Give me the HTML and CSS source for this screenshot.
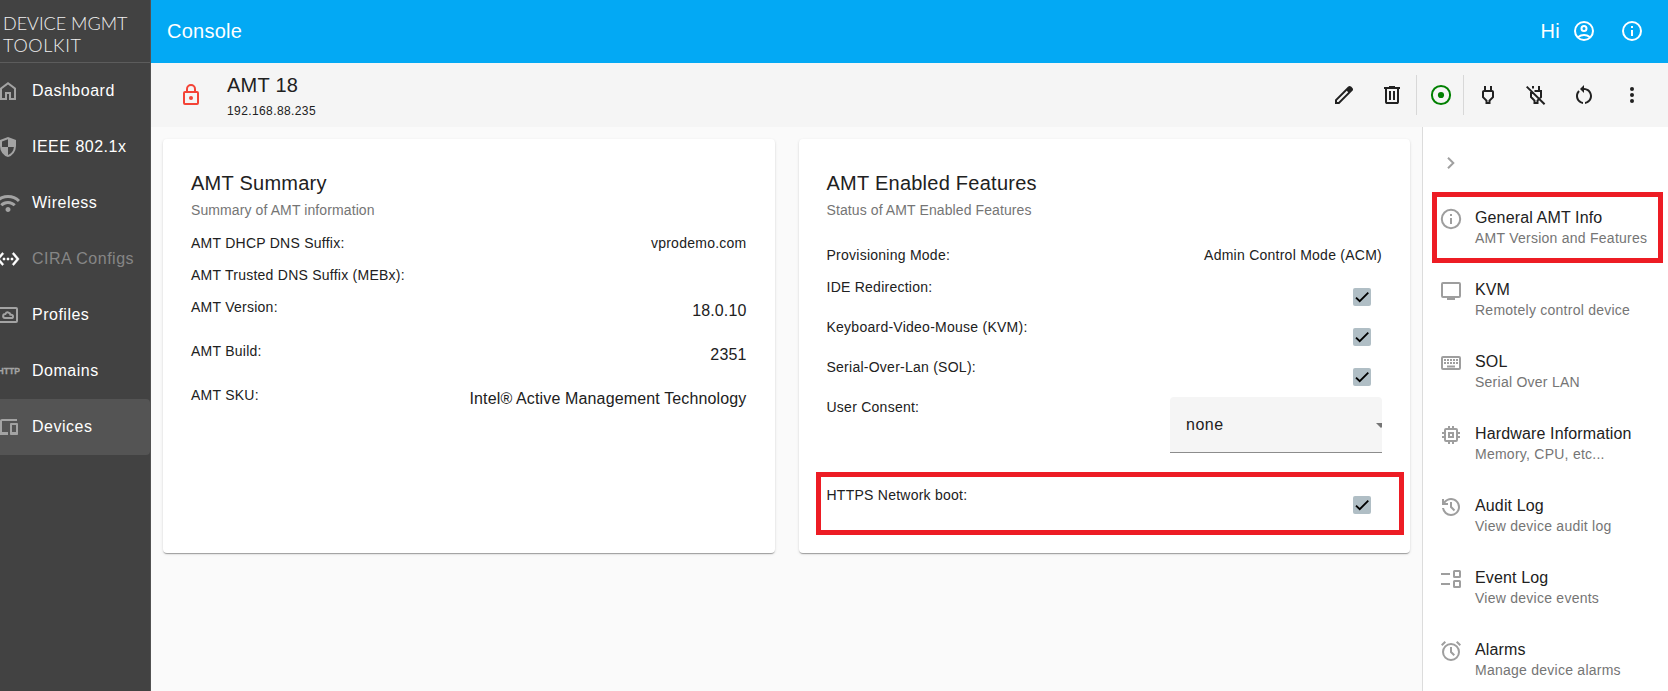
FILE: index.html
```html
<!DOCTYPE html>
<html lang="en">
<head>
<meta charset="utf-8">
<title>Device Management Toolkit</title>
<link rel="stylesheet" href="styles.css">
</head>
<body>
<div class="app">
  <aside class="sidebar">
    <div class="brand"><span class="brand-a">DEVICE MGMT</span><span class="brand-b">TOOLKIT</span></div>
    <nav class="nav">
      <a class="nav-item"><svg class="icon" viewBox="0 -960 960 960"><path d="M240-200h120v-240h240v240h120v-360L480-740 240-560v360Zm-80 80v-480l320-240 320 240v480H520v-240h-80v240H160Z"/></svg><span>Dashboard</span></a>
      <a class="nav-item"><svg class="icon" viewBox="0 -960 960 960"><path d="M480-80q-139-35-229.500-159.500T160-516v-244l320-120 320 120v244q0 152-90.500 276.500T480-80Zm0-84q97-30 162-118.500T718-480H480v-315l-240 90v207q0 7 2 18h238v316Z"/></svg><span>IEEE 802.1x</span></a>
      <a class="nav-item"><svg class="icon" viewBox="0 -960 960 960"><path d="M480-120q-42 0-71-29t-29-71q0-42 29-71t71-29q42 0 71 29t29 71q0 42-29 71t-71 29ZM254-346l-84-86q59-59 138.500-93.500T480-560q92 0 171.500 35T790-430l-84 84q-44-44-102-69t-124-25q-66 0-124 25t-102 69ZM84-516 0-600q92-94 215-147t265-53q142 0 265 53t215 147l-84 84q-77-77-178.500-120.500T480-680q-116 0-217.500 43.500T84-516Z"/></svg><span>Wireless</span></a>
      <a class="nav-item disabled"><svg class="icon heavy" viewBox="0 0 24 24"><path d="M7.770 6.760 6.230 5.480.82 12l5.410 6.520 1.540-1.280L3.420 12l4.350-5.240zM7 13h2v-2H7v2zm10-2h-2v2h2v-2zm-6 2h2v-2h-2v2zm6.770-7.520-1.540 1.280L20.580 12l-4.350 5.240 1.540 1.280L23.180 12l-5.410-6.520z"/></svg><span>CIRA Configs</span></a>
      <a class="nav-item"><svg class="icon line" viewBox="0 0 24 24"><rect x="3" y="5" width="18" height="14" rx="1"/><path d="M9 15.100h6.300a1.700 1.700 0 0 0 0-3.400h-.9a2.600 2.600 0 0 0-5-.7 2.050 2.050 0 0 0-.4 4.100z"/></svg><span>Profiles</span></a>
      <a class="nav-item"><svg class="icon" viewBox="0 0 24 24"><text class="http" x="1.500" y="15" textLength="22.500" lengthAdjust="spacingAndGlyphs">HTTP</text></svg><span>Domains</span></a>
      <a class="nav-item active"><svg class="icon" viewBox="0 -960 960 960"><path d="M80-160v-120h80v-440q0-33 23.500-56.500T240-800h600v80H240v440h240v120H80Zm520 0q-17 0-28.500-11.500T560-200v-400q0-17 11.500-28.500T600-640h240q17 0 28.500 11.500T880-600v400q0 17-11.500 28.500T840-160H600Zm40-120h160v-280H640v280Z"/></svg><span>Devices</span></a>
    </nav>
  </aside>

  <div class="page">
    <header class="topbar">
      <h1 class="topbar-title">Console</h1>
      <span class="greeting">Hi</span>
      <button class="icon-btn"><svg class="icon line" viewBox="0 0 24 24"><circle cx="12" cy="12" r="9"/><circle cx="12" cy="9.500" r="2.500"/><path d="M5.800 18.200Q12 13.800 18.200 18.200"/></svg></button>
      <button class="icon-btn"><svg class="icon line" viewBox="0 0 24 24"><circle cx="12" cy="12" r="9"/><path d="M12 7v2M12 11v6"/></svg></button>
    </header>

    <div class="toolbar">
      <svg class="icon line lock" viewBox="0 0 24 24"><rect x="5" y="9" width="14" height="12" rx="1"/><path d="M8 9V6a4 4 0 0 1 8 0v3"/><circle class="dot" cx="12" cy="15" r="2"/></svg>
      <div class="device">
        <div class="device-name">AMT 18</div>
        <div class="device-ip">192.168.88.235</div>
      </div>
      <button class="icon-btn"><svg class="icon" viewBox="0 -960 960 960"><path d="M200-200h57l391-391-57-57-391 391v57Zm-80 80v-170l528-527q12-11 26.500-17t30.500-6q16 0 31 6t26 18l55 56q12 11 17.500 26t5.500 30q0 16-5.500 30.500T817-647L290-120H120Z"/></svg></button>
      <button class="icon-btn"><svg class="icon" viewBox="0 -960 960 960"><path d="M280-120q-33 0-56.500-23.500T200-200v-520h-40v-80h200v-40h240v40h200v80h-40v520q0 33-23.500 56.500T680-120H280Zm400-600H280v520h400v-520ZM360-280h80v-360h-80v360Zm160 0h80v-360h-80v360Z"/></svg></button>
      <div class="power-state"><svg class="icon line" viewBox="0 0 24 24"><circle cx="12" cy="12" r="9.100"/><circle class="dot" cx="12" cy="12" r="3.100"/></svg></div>
      <button class="icon-btn"><svg class="icon" viewBox="0 0 24 24"><path d="M16 9v4.660l-3.500 3.510V19h-1v-1.830L8 13.650V9h8m0-6h-2v4h-4V3H8v4C6.900 7 6 7.890 6 8.980v5.520L9.500 18v3h5v-3l3.500-3.510V9c0-1.100-.9-2-2-2V3z"/></svg></button>
      <button class="icon-btn"><svg class="icon line" viewBox="0 0 24 24"><path d="M9 3v2.500M15 3v5M10.500 8H17v6l-1 1M7 9v5l3.500 3.600V20h3v-2.400l1.200-1.200M2.700 3.600 20.600 21.300"/></svg></button>
      <button class="icon-btn"><svg class="icon" viewBox="0 0 24 24"><path d="M12 5V2L8 6l4 4V7c3.310 0 6 2.690 6 6 0 2.970-2.170 5.430-5 5.910v2.020c3.950-.49 7-3.850 7-7.930 0-4.420-3.580-8-8-8zm-6 8c0-1.650.67-3.150 1.760-4.240L6.340 7.340C4.900 8.790 4 10.790 4 13c0 4.080 3.050 7.440 7 7.930v-2.020c-2.830-.48-5-2.940-5-5.910z"/></svg></button>
      <button class="icon-btn"><svg class="icon" viewBox="0 0 24 24"><circle cx="12" cy="6" r="2"/><circle cx="12" cy="12" r="2"/><circle cx="12" cy="18" r="2"/></svg></button>
    </div>

    <div class="body">
      <main class="cards">
        <section class="card">
          <h2 class="card-title">AMT Summary</h2>
          <p class="card-sub">Summary of AMT information</p>
          <div class="rows">
            <div class="row"><span>AMT DHCP DNS Suffix:</span><span>vprodemo.com</span></div>
            <div class="row"><span>AMT Trusted DNS Suffix (MEBx):</span></div>
            <div class="row tall"><span>AMT Version:</span><span class="value">18.0.10</span></div>
            <div class="row tall"><span>AMT Build:</span><span class="value">2351</span></div>
            <div class="row tall"><span>AMT SKU:</span><span class="value">Intel® Active Management Technology</span></div>
          </div>
        </section>

        <section class="card">
          <h2 class="card-title">AMT Enabled Features</h2>
          <p class="card-sub">Status of AMT Enabled Features</p>
          <div class="rows features">
            <div class="row"><span>Provisioning Mode:</span><span>Admin Control Mode (ACM)</span></div>
            <div class="row check"><span>IDE Redirection:</span><span class="checkbox"><svg viewBox="0 0 24 24"><path d="M1.730 12.910 8.100 19.280 22.790 4.590"/></svg></span></div>
            <div class="row check"><span>Keyboard-Video-Mouse (KVM):</span><span class="checkbox"><svg viewBox="0 0 24 24"><path d="M1.730 12.910 8.100 19.280 22.790 4.590"/></svg></span></div>
            <div class="row check"><span>Serial-Over-Lan (SOL):</span><span class="checkbox"><svg viewBox="0 0 24 24"><path d="M1.730 12.910 8.100 19.280 22.790 4.590"/></svg></span></div>
            <div class="row consent"><span>User Consent:</span><div class="select"><span>none</span><i class="arrow"></i></div></div>
            <div class="row check marked"><span>HTTPS Network boot:</span><span class="checkbox"><svg viewBox="0 0 24 24"><path d="M1.730 12.910 8.100 19.280 22.790 4.590"/></svg></span></div>
          </div>
        </section>
      </main>

      <aside class="panel">
        <svg class="icon line chevron" viewBox="0 0 24 24"><path d="m9 6.700 5.300 5.300L9 17.300"/></svg>
        <a class="panel-item marked"><svg class="icon line" viewBox="0 0 24 24"><circle cx="12" cy="12" r="9.200"/><path d="M12 7v2M12 11v6"/></svg><div><div class="item-title">General AMT Info</div><div class="item-sub">AMT Version and Features</div></div></a>
        <a class="panel-item"><svg class="icon line" viewBox="0 0 24 24"><rect x="3" y="4" width="18" height="14" rx="1"/><path d="M8 20h8"/></svg><div><div class="item-title">KVM</div><div class="item-sub">Remotely control device</div></div></a>
        <a class="panel-item"><svg class="icon line" viewBox="0 0 24 24"><rect x="3" y="6" width="18" height="12" rx="1"/><path stroke-dasharray="2 1" d="M5 9h14M5 12h14"/><path d="M8 15.500h8"/></svg><div><div class="item-title">SOL</div><div class="item-sub">Serial Over LAN</div></div></a>
        <a class="panel-item"><svg class="icon line" viewBox="0 0 24 24"><rect x="6" y="6" width="12" height="12" rx="1"/><rect x="10" y="10" width="4" height="4"/><path d="M10 3v3M14 3v3M10 18v3M14 18v3M3 10h3M3 14h3M18 10h3M18 14h3"/></svg><div><div class="item-title">Hardware Information</div><div class="item-sub">Memory, CPU, etc...</div></div></a>
        <a class="panel-item"><svg class="icon" viewBox="0 -960 960 960"><path d="M480-120q-138 0-240.500-91.500T122-440h82q14 104 92.500 172T480-200q117 0 198.500-81.500T760-480q0-117-81.500-198.500T480-760q-69 0-129 32t-101 88h110v80H120v-240h80v94q51-64 124.500-99T480-840q75 0 140.500 28.500t114 77q48.500 48.500 77 114T840-480q0 75-28.500 140.500t-77 114q-48.500 48.500-114 77T480-120Zm112-192L440-464v-216h80v184l128 128-56 56Z"/></svg><div><div class="item-title">Audit Log</div><div class="item-sub">View device audit log</div></div></a>
        <a class="panel-item"><svg class="icon line" viewBox="0 0 24 24"><rect x="15" y="4" width="6" height="6" rx=".5"/><rect x="15" y="14" width="6" height="6" rx=".5"/><path d="M2 7h9M2 17h9"/></svg><div><div class="item-title">Event Log</div><div class="item-sub">View device events</div></div></a>
        <a class="panel-item"><svg class="icon line" viewBox="0 0 24 24"><circle cx="12" cy="13" r="8"/><path d="M12 8v5l3.300 3.300M2.700 6.300l3.600-3.500M21.300 6.300l-3.600-3.500"/></svg><div><div class="item-title">Alarms</div><div class="item-sub">Manage device alarms</div></div></a>
      </aside>
    </div>
  </div>
</div>
</body>
</html>
```
FILE: styles.css
```css
* { box-sizing: border-box; }

body {
  margin: 0;
  font-family: "Liberation Sans", Arial, sans-serif;
  font-size: 14px;
  line-height: 20px;
  letter-spacing: 0.25px;
  color: #212121;
  background: #fafafa;
}

h1, h2, p { margin: 0; font-weight: 400; }

.app { display: flex; height: 691px; overflow: hidden; }

.icon { display: block; flex: none; width: 24px; height: 24px; fill: currentColor; }
.icon.line { fill: none; stroke: currentColor; stroke-width: 2; }
.icon.heavy { stroke: currentColor; stroke-width: 0.5; }
.icon .dot { fill: currentColor; stroke: none; }

.icon-btn {
  display: flex;
  flex: none;
  align-items: center;
  justify-content: center;
  width: 48px;
  height: 48px;
  padding: 0;
  border: 0;
  background: none;
  color: inherit;
}

/* Sidebar */
.sidebar {
  flex: none;
  width: 151px;
  overflow: hidden;
  background: #424242;
  border-right: 1px solid #525252;
  color: #fff;
}
.brand {
  display: flex;
  flex-direction: column;
  height: 63px;
  padding: 12px 0 0 3px;
  border-bottom: 1px solid #5c5c5c;
  font-family: Lato, sans-serif;
  font-weight: 300;
  font-size: 18px;
  line-height: 22px;
  color: #f0f0f0;
  white-space: nowrap;
}
.brand-a { letter-spacing: 0; }
.brand-b { letter-spacing: 0.7px; }
.nav-item {
  display: flex;
  align-items: center;
  height: 56px;
  font-size: 16px;
  letter-spacing: 0.5px;
  white-space: nowrap;
}
.nav-item .icon { margin: 0 12px 0 -4px; color: #a3a3a3; }
.nav-item.disabled { color: #868686; }
.nav-item.disabled .icon { color: #fff; }
.nav-item.active { background: #545454; border-radius: 0 4px 4px 0; }
.http {
  font: bold 8.5px "Liberation Sans", Arial, sans-serif;
  letter-spacing: 0;
  stroke: currentColor;
  stroke-width: 0.3;
}

/* Top bars */
.page { display: flex; flex: 1; flex-direction: column; min-width: 0; }
.topbar {
  display: flex;
  flex: none;
  align-items: center;
  height: 63px;
  padding: 0 12px 1px 16px;
  background: #03a9f4;
  color: #fff;
  font-size: 20px;
}
.topbar-title { flex: 1; font-size: 20px; }
.toolbar {
  display: flex;
  flex: none;
  align-items: center;
  height: 64px;
  padding: 0 12px 0 28px;
  background: #f5f5f5;
}
.lock { color: #f44336; }
.device { flex: 1; padding: 2px 0 0 24px; }
.device-name { font-size: 20px; line-height: 28px; }
.device-ip { height: 22px; font-size: 12px; line-height: 24px; letter-spacing: 0.4px; }
.power-state {
  display: flex;
  align-items: center;
  justify-content: center;
  width: 48px;
  height: 40px;
  padding-left: 2px;
  border: 1px solid #d8d8d8;
  border-width: 0 1px;
  color: #008000;
}

/* Content */
.body { display: flex; flex: 1; min-height: 0; }
.cards { display: flex; flex: 1; align-items: flex-start; gap: 24px; padding: 12px; }
.card {
  flex: 1;
  height: 414px;
  padding: 28px;
  background: #fff;
  border-radius: 4px;
  box-shadow: 0 2px 1px -1px rgba(0,0,0,.2), 0 1px 1px rgba(0,0,0,.14), 0 1px 3px rgba(0,0,0,.12);
}
.card-title { font-size: 20px; line-height: 32px; }
.card-sub { line-height: 22px; letter-spacing: 0.1px; color: #757575; }
.rows { padding-top: 12px; }
.rows.features { padding-top: 24px; }
.row { position: relative; display: flex; justify-content: space-between; height: 32px; }
.row.tall { height: 44px; }
.value { font-size: 16px; line-height: 27px; letter-spacing: 0.14px; }
.row.check { height: 40px; }
.row.consent { height: 88px; }
.checkbox {
  display: flex;
  align-items: center;
  justify-content: center;
  width: 18px;
  height: 18px;
  margin: 11px 11px 0 0;
  border-radius: 2px;
  background: #b0bec5;
}
.checkbox svg { width: 14px; height: 14px; fill: none; stroke: #000; stroke-width: 3.1; }
.select {
  display: flex;
  align-items: center;
  justify-content: space-between;
  width: 212px;
  height: 56px;
  padding-left: 16px;
  overflow: hidden;
  background: #f5f5f5;
  border-bottom: 1px solid #8c8c8c;
  border-radius: 4px 4px 0 0;
  font-size: 16px;
  letter-spacing: 0.5px;
}
.arrow { margin: 1px -4px 0 0; border: 5px solid transparent; border-top-color: #757575; border-bottom: 0; }

/* Highlight frames over the marked entries */
.marked::after { content: ""; position: absolute; border: 5px solid #ed1c24; }
.row.marked::after { inset: -13px -22px -10px -11px; }
.panel-item.marked::after { inset: 1px 5px 0 9px; }

/* Right panel */
.panel { flex: none; width: 246px; border-left: 1px solid #dcdcdc; background: #fff; }
.chevron { margin: 24px 0 16px 16px; color: #a0a0a0; }
.panel-item { position: relative; display: flex; gap: 12px; height: 72px; padding: 14px 0 0 16px; white-space: nowrap; }
.panel-item .icon { margin-top: 2px; color: #9e9e9e; }
.item-title { height: 23px; padding-top: 2px; font-size: 16px; line-height: 22px; letter-spacing: 0.14px; }
.item-sub { color: #757575; }
```
